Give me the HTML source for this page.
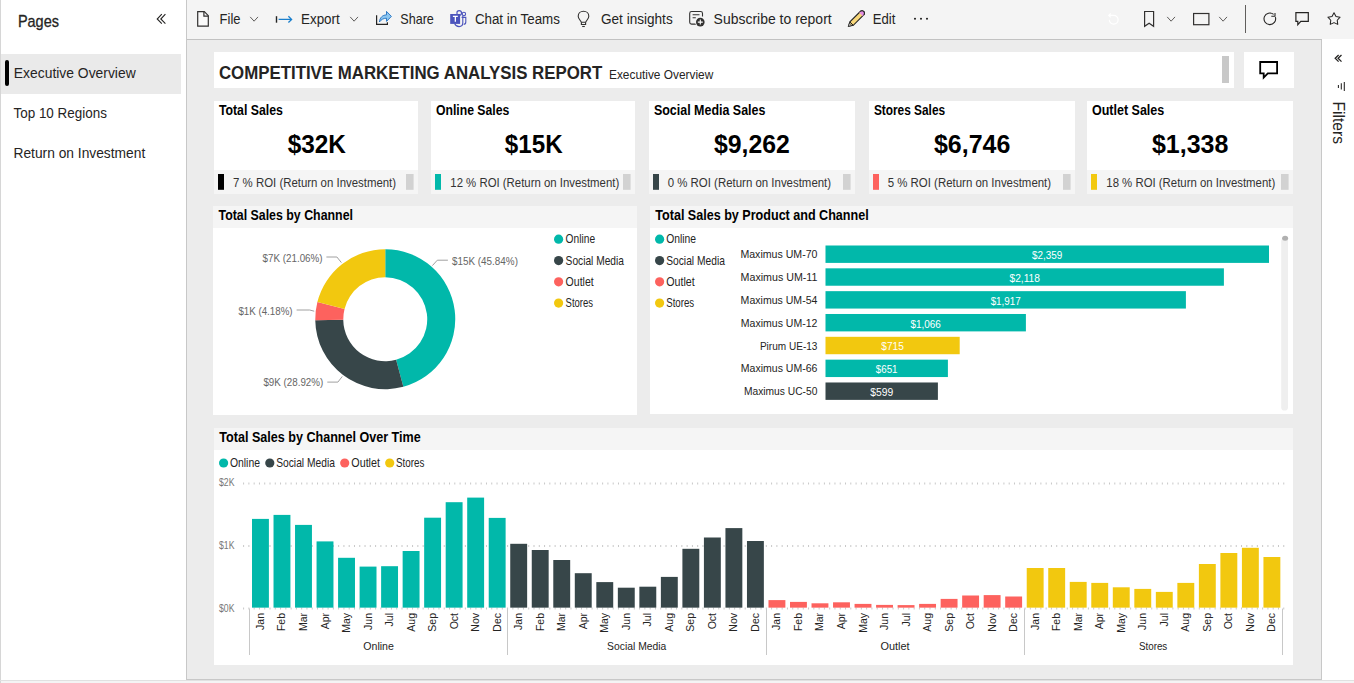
<!DOCTYPE html>
<html><head><meta charset="utf-8"><style>
html,body{margin:0;padding:0;background:#fff;}
#root{position:relative;width:1354px;height:683px;overflow:hidden;font-family:"Liberation Sans",sans-serif;}
svg text{font-family:"Liberation Sans",sans-serif;}
</style></head><body><div id="root">
<div style="position:absolute;left:0px;top:0px;width:1354px;height:683px;background:#f4f4f4"></div>
<div style="position:absolute;left:0px;top:0px;width:186px;height:680px;background:#ffffff"></div>
<div style="position:absolute;left:0px;top:0px;width:1px;height:683px;background:#d6d6d6"></div>
<div style="position:absolute;left:0px;top:680px;width:1354px;height:1px;background:#e1e1e1"></div>
<div style="position:absolute;left:187px;top:0px;width:1167px;height:39px;background:#f4f4f4"></div>
<div style="position:absolute;left:186px;top:0px;width:1px;height:680px;background:#c8c8c8"></div>
<div style="position:absolute;left:187px;top:39px;width:1135px;height:1px;background:#c2c2c2"></div>
<div style="position:absolute;left:187px;top:40px;width:1134px;height:639px;background:#ececec"></div>
<div style="position:absolute;left:1321px;top:40px;width:1px;height:640px;background:#c8c8c8"></div>
<div style="position:absolute;left:187px;top:679px;width:1135px;height:1px;background:#c8c8c8"></div>
<div style="position:absolute;left:1322px;top:39px;width:32px;height:641px;background:#ffffff"></div>
<div style="position:absolute;left:1px;top:54px;width:180px;height:40px;background:#eaeaea"></div>
<div style="position:absolute;left:5px;top:60px;width:4px;height:26px;background:#000;border-radius:2px"></div>
<div style="position:absolute;left:214px;top:52px;width:1020px;height:36px;background:#fff"></div>
<div style="position:absolute;left:1222px;top:56px;width:7px;height:27px;background:#c8c8c8"></div>
<div style="position:absolute;left:1244px;top:52px;width:50px;height:36px;background:#fff"></div>
<div style="position:absolute;left:214px;top:101px;width:204px;height:69px;background:#fff"></div>
<div style="position:absolute;left:214px;top:170px;width:204px;height:24px;background:#f5f5f5"></div>
<div style="position:absolute;left:431px;top:101px;width:204px;height:69px;background:#fff"></div>
<div style="position:absolute;left:431px;top:170px;width:204px;height:24px;background:#f5f5f5"></div>
<div style="position:absolute;left:649px;top:101px;width:206px;height:69px;background:#fff"></div>
<div style="position:absolute;left:649px;top:170px;width:206px;height:24px;background:#f5f5f5"></div>
<div style="position:absolute;left:869px;top:101px;width:206px;height:69px;background:#fff"></div>
<div style="position:absolute;left:869px;top:170px;width:206px;height:24px;background:#f5f5f5"></div>
<div style="position:absolute;left:1087px;top:101px;width:206px;height:69px;background:#fff"></div>
<div style="position:absolute;left:1087px;top:170px;width:206px;height:24px;background:#f5f5f5"></div>
<div style="position:absolute;left:213px;top:206px;width:424px;height:22px;background:#f5f5f5"></div>
<div style="position:absolute;left:213px;top:228px;width:424px;height:187px;background:#fff"></div>
<div style="position:absolute;left:650px;top:206px;width:643px;height:22px;background:#f5f5f5"></div>
<div style="position:absolute;left:650px;top:228px;width:643px;height:186px;background:#fff"></div>
<div style="position:absolute;left:214px;top:428px;width:1079px;height:22px;background:#f5f5f5"></div>
<div style="position:absolute;left:214px;top:450px;width:1079px;height:215px;background:#fff"></div>
<svg style="position:absolute;left:0;top:0" width="1354" height="683" viewBox="0 0 1354 683">
<text transform="translate(17.90 27.00) scale(0.9067 1)" x="-0.00" y="0" font-size="15.99" font-weight="normal" fill="#252423" stroke="#252423" stroke-width="0.3">Pages</text>
<text transform="translate(13.80 78.00) scale(0.9562 1)" x="-0.00" y="0" font-size="14.53" font-weight="normal" fill="#252423">Executive Overview</text>
<text transform="translate(13.50 118.00) scale(0.9256 1)" x="-0.00" y="0" font-size="14.53" font-weight="normal" fill="#252423">Top 10 Regions</text>
<text transform="translate(13.50 158.00) scale(0.9485 1)" x="-0.00" y="0" font-size="14.53" font-weight="normal" fill="#252423">Return on Investment</text>
<text transform="translate(219.60 24.00) scale(0.8931 1)" x="-0.00" y="0" font-size="14.53" font-weight="normal" fill="#252423">File</text>
<text transform="translate(301.00 24.00) scale(0.9237 1)" x="-0.00" y="0" font-size="14.53" font-weight="normal" fill="#252423">Export</text>
<text transform="translate(400.30 24.00) scale(0.8658 1)" x="-0.00" y="0" font-size="14.53" font-weight="normal" fill="#252423">Share</text>
<text transform="translate(474.90 24.00) scale(0.9184 1)" x="-0.00" y="0" font-size="14.53" font-weight="normal" fill="#252423">Chat in Teams</text>
<text transform="translate(601.00 24.00) scale(0.9356 1)" x="-0.00" y="0" font-size="14.53" font-weight="normal" fill="#252423">Get insights</text>
<text transform="translate(713.60 24.00) scale(0.9624 1)" x="-0.00" y="0" font-size="14.53" font-weight="normal" fill="#252423">Subscribe to report</text>
<text transform="translate(872.80 24.00) scale(0.9014 1)" x="-0.00" y="0" font-size="14.53" font-weight="normal" fill="#252423">Edit</text>
<text transform="translate(218.90 79.00) scale(0.8920 1)" x="-0.00" y="0" font-size="18.90" font-weight="bold" fill="#252423">COMPETITIVE MARKETING ANALYSIS REPORT</text>
<text transform="translate(609.00 78.70) scale(0.9498 1)" x="-0.00" y="0" font-size="12.50" font-weight="normal" fill="#252423">Executive Overview</text>
<path d="M161.8,14.2 L157.2,19 L161.8,23.7" fill="none" stroke="#252423" stroke-width="1.1" />
<path d="M165.4,14.2 L160.8,19 L165.4,23.7" fill="none" stroke="#252423" stroke-width="1.1" />
<path d="M197.7,11.7 H204.3 L208.3,15.7 V26.2 H197.7 Z" fill="#fafafa" stroke="#323130" stroke-width="1.2" />
<path d="M203.9,11.7 V16.1 H208.3" fill="none" stroke="#323130" stroke-width="1.2" />
<path d="M250.2,16.9 L254.1,21.2 L258,16.9" fill="none" stroke="#605e5c" stroke-width="1.0" />
<path d="M350.2,16.9 L354.1,21.2 L358,16.9" fill="none" stroke="#605e5c" stroke-width="1.0" />
<path d="M276.5,16.2 V22.7" fill="none" stroke="#252423" stroke-width="1.4" />
<path d="M278.6,19.4 H291.4 M288.4,16.3 L291.6,19.4 L288.4,22.5" fill="none" stroke="#1a7fcc" stroke-width="1.3" />
<path d="M376.6,15.3 V24.3 H387.4 V22.2" fill="none" stroke="#252423" stroke-width="1.2" />
<path d="M379.4,22 C379.8,17.6 382.6,14.9 386.5,14.9 V11.4 L391.4,16.4 L386.5,21.4 V18.2 C383.4,18.2 381.2,19.6 379.4,22 Z" fill="#8cc6f0" stroke="#1f6fc1" stroke-width="0.9" />
<path d="M454.6,23.5 C455.5,25.8 457.2,26.6 459.1,26.6 C461.6,26.6 462.8,24.6 462.8,22.5 V16.0" fill="none" stroke="#4b53bc" stroke-width="1.1" />
<circle cx="459.2" cy="12.9" r="2.3" fill="none" stroke="#4b53bc" stroke-width="1.1"/>
<circle cx="463.9" cy="14.0" r="1.7" fill="none" stroke="#4b53bc" stroke-width="1.1"/>
<path d="M461.6,17.4 H465.8 V22 C465.8,23.5 464.8,24.3 463.6,24.3" fill="none" stroke="#4b53bc" stroke-width="1.1" />
<rect x="450.2" y="14" width="9.9" height="9.9" fill="#4b53bc" />
<path d="M452.9,16.4 H457.8 M455.35,16.4 V21.8" fill="none" stroke="#ffffff" stroke-width="1.3" />
<path d="M583.5,11.3 C580.4,11.3 578.2,13.5 578.2,16.3 C578.2,18.3 579.6,19.4 580.6,21 L581.4,22.3 H585.6 L586.4,21 C587.4,19.4 588.8,18.3 588.8,16.3 C588.8,13.5 586.6,11.3 583.5,11.3 Z" fill="none" stroke="#323130" stroke-width="1.1" />
<path d="M581.4,22.3 V24.5 H585.6 V22.3" fill="none" stroke="#323130" stroke-width="1.1" />
<path d="M582.2,26.5 H584.8" fill="none" stroke="#323130" stroke-width="1.1" />
<path d="M696.2,24.1 H691.6 C690.5,24.1 689.7,23.3 689.7,22.2 V13.4 C689.7,12.3 690.5,11.5 691.6,11.5 H700.6 C701.7,11.5 702.5,12.3 702.5,13.4 V16.5" fill="none" stroke="#323130" stroke-width="1.1" />
<path d="M692.6,14.7 H699.5 M692.6,17.7 H695.8" fill="none" stroke="#323130" stroke-width="1.1" />
<circle cx="700.3" cy="22.1" r="5.2" fill="#f4f4f4"/>
<circle cx="700.3" cy="22.1" r="4.3" fill="#323130"/>
<path d="M700.3,19.6 V24.6 M697.8,22.1 H702.8" fill="none" stroke="#ffffff" stroke-width="1.1" />
<path d="M848.5,26.3 L849.9,21.9 L860.3,11.5 C861.3,10.5 862.8,10.5 863.7,11.5 C864.7,12.4 864.7,13.9 863.7,14.9 L853.3,25.3 Z" fill="#f8d77a" stroke="#252423" stroke-width="1.1" />
<path d="M860.3,11.5 C861.3,10.5 862.8,10.5 863.7,11.5 C864.7,12.4 864.7,13.9 863.7,14.9 L862.7,15.9 L859.3,12.5 Z" fill="#e48ee4" stroke="none" stroke-width="0" />
<path d="M860.3,11.5 C861.3,10.5 862.8,10.5 863.7,11.5 C864.7,12.4 864.7,13.9 863.7,14.9" fill="none" stroke="#252423" stroke-width="1.1" />
<path d="M849.9,21.9 L853.3,25.3" fill="none" stroke="#252423" stroke-width="1.0" />
<path d="M849.4,23.2 L848.5,26.3 L851.8,25.4 Z" fill="#ffffff" stroke="#252423" stroke-width="0.8" />
<circle cx="915.0" cy="18.8" r="1.05" fill="#252423"/>
<circle cx="921.0" cy="18.8" r="1.05" fill="#252423"/>
<circle cx="927.0" cy="18.8" r="1.05" fill="#252423"/>
<path d="M1109,15.4 H1113.7 A4.4,4.4 0 1 1 1109.3,19.8" fill="none" stroke="#ffffff" stroke-width="1.2" />
<path d="M1110.7,13.5 L1108.8,15.4 L1110.7,17.3" fill="none" stroke="#ffffff" stroke-width="1.2" />
<path d="M1144.6,11.5 H1153.6 V26.3 L1149.1,23.2 L1144.6,26.3 Z" fill="none" stroke="#323130" stroke-width="1.2" />
<path d="M1167.2,16.9 L1171.1,21.2 L1175,16.9" fill="none" stroke="#605e5c" stroke-width="1.0" />
<rect x="1193.6" y="13.5" width="15.3" height="11.2" fill="none" stroke="#323130" stroke-width="1.2"/>
<path d="M1219.2,16.9 L1223.1,21.2 L1227,16.9" fill="none" stroke="#605e5c" stroke-width="1.0" />
<rect x="1245" y="5" width="1" height="28" fill="#605e5c" />
<path d="M1275.4,17.2 A5.8,5.8 0 1 1 1273.6,14.4" fill="none" stroke="#252423" stroke-width="1.1" />
<path d="M1271.3,16.3 H1275.0 V13.0" fill="none" stroke="#252423" stroke-width="1.05" />
<path d="M1295.9,12.6 H1308.3 V21.3 H1300.8 L1297.8,24.6 V21.3 H1295.9 Z" fill="none" stroke="#252423" stroke-width="1.2" />
<path d="M1334.00,12.80 L1336.00,16.45 L1340.09,17.22 L1337.23,20.25 L1337.76,24.38 L1334.00,22.60 L1330.24,24.38 L1330.77,20.25 L1327.91,17.22 L1332.00,16.45 Z" fill="none" stroke="#252423" stroke-width="1.05" stroke-linejoin="round"/>
<path d="M1338.6,55.0 L1335.2,58.3 L1338.6,61.6" fill="none" stroke="#252423" stroke-width="1.3" />
<path d="M1341.5,55.0 L1338.1,58.3 L1341.5,61.6" fill="none" stroke="#252423" stroke-width="1.3" />
<path d="M1338.4,84.9 V87.9 M1341.3,83.3 V89.5 M1344.3,82 V90.9" fill="none" stroke="#252423" stroke-width="1.05" />
<text transform="translate(1333.0 101.6) rotate(90)" x="0" y="0" font-size="16.4" fill="#252423" textLength="42.4" lengthAdjust="spacingAndGlyphs">Filters</text>
<path d="M1260.2,62 H1277.1 V73.3 H1267.8 L1263.7,77.6 V73.3 H1260.2 Z" fill="none" stroke="#000000" stroke-width="1.8" />
<text transform="translate(218.90 114.80) scale(0.8735 1)" x="-0.00" y="0" font-size="14.10" font-weight="bold" fill="#000000">Total Sales</text>
<text transform="translate(287.70 152.80) scale(0.9308 1)" x="-0.00" y="0" font-size="26.16" font-weight="bold" fill="#000000">$32K</text>
<rect x="218" y="174" width="6" height="15.8" fill="#000000" />
<rect x="406" y="174" width="7.6" height="15.8" fill="#d2d2d2" />
<text transform="translate(233.10 187.00) scale(0.8733 1)" x="-0.00" y="0" font-size="13.08" font-weight="normal" fill="#333333">7 % ROI (Return on Investment)</text>
<text transform="translate(435.90 114.80) scale(0.8681 1)" x="-0.00" y="0" font-size="14.10" font-weight="bold" fill="#000000">Online Sales</text>
<text transform="translate(504.80 152.80) scale(0.9244 1)" x="-0.00" y="0" font-size="26.16" font-weight="bold" fill="#000000">$15K</text>
<rect x="435" y="174" width="6" height="15.8" fill="#01B8AA" />
<rect x="623" y="174" width="7.6" height="15.8" fill="#d2d2d2" />
<text transform="translate(450.30 187.00) scale(0.8716 1)" x="-0.00" y="0" font-size="13.08" font-weight="normal" fill="#333333">12 % ROI (Return on Investment)</text>
<text transform="translate(653.90 114.80) scale(0.8852 1)" x="-0.00" y="0" font-size="14.10" font-weight="bold" fill="#000000">Social Media Sales</text>
<text transform="translate(713.90 152.80) scale(0.9493 1)" x="-0.00" y="0" font-size="26.16" font-weight="bold" fill="#000000">$9,262</text>
<rect x="653" y="174" width="6" height="15.8" fill="#374649" />
<rect x="843" y="174" width="7.6" height="15.8" fill="#d2d2d2" />
<text transform="translate(667.70 187.00) scale(0.8755 1)" x="-0.00" y="0" font-size="13.08" font-weight="normal" fill="#333333">0 % ROI (Return on Investment)</text>
<text transform="translate(873.90 114.80) scale(0.8422 1)" x="-0.00" y="0" font-size="14.10" font-weight="bold" fill="#000000">Stores Sales</text>
<text transform="translate(933.90 152.80) scale(0.9556 1)" x="-0.00" y="0" font-size="26.16" font-weight="bold" fill="#000000">$6,746</text>
<rect x="873" y="174" width="6" height="15.8" fill="#FD625E" />
<rect x="1063" y="174" width="7.6" height="15.8" fill="#d2d2d2" />
<text transform="translate(887.70 187.00) scale(0.8755 1)" x="-0.00" y="0" font-size="13.08" font-weight="normal" fill="#333333">5 % ROI (Return on Investment)</text>
<text transform="translate(1091.90 114.80) scale(0.8884 1)" x="-0.00" y="0" font-size="14.10" font-weight="bold" fill="#000000">Outlet Sales</text>
<text transform="translate(1151.90 152.80) scale(0.9556 1)" x="-0.00" y="0" font-size="26.16" font-weight="bold" fill="#000000">$1,338</text>
<rect x="1091" y="174" width="6" height="15.8" fill="#F2C80F" />
<rect x="1281" y="174" width="7.6" height="15.8" fill="#d2d2d2" />
<text transform="translate(1106.30 187.00) scale(0.8716 1)" x="-0.00" y="0" font-size="13.08" font-weight="normal" fill="#333333">18 % ROI (Return on Investment)</text>
<text transform="translate(218.50 219.70) scale(0.8877 1)" x="-0.00" y="0" font-size="13.95" font-weight="bold" fill="#000000">Total Sales by Channel</text>
<text transform="translate(655.30 219.70) scale(0.9017 1)" x="-0.00" y="0" font-size="13.95" font-weight="bold" fill="#000000">Total Sales by Product and Channel</text>
<text transform="translate(219.30 441.60) scale(0.9025 1)" x="-0.00" y="0" font-size="13.95" font-weight="bold" fill="#000000">Total Sales by Channel Over Time</text>
<path d="M385.25,249.20 A70.0,70.0 0 0 1 403.34,386.82 L396.10,359.77 A42.0,42.0 0 0 0 385.25,277.20 Z" fill="#01B8AA"/>
<path d="M403.34,386.82 A70.0,70.0 0 0 1 315.26,320.26 L343.25,319.83 A42.0,42.0 0 0 0 396.10,359.77 Z" fill="#374649"/>
<path d="M315.26,320.26 A70.0,70.0 0 0 1 317.38,302.05 L344.53,308.91 A42.0,42.0 0 0 0 343.25,319.83 Z" fill="#FD625E"/>
<path d="M317.38,302.05 A70.0,70.0 0 0 1 385.25,249.20 L385.25,277.20 A42.0,42.0 0 0 0 344.53,308.91 Z" fill="#F2C80F"/>
<path d="M432.4,265.6 L437.3,260.2 H447.9" fill="none" stroke="#a0a0a0" stroke-width="1" />
<path d="M326.4,257 H336.9 L341.4,262.6" fill="none" stroke="#a0a0a0" stroke-width="1" />
<path d="M296.6,310 H309.7 L314.2,311.2" fill="none" stroke="#a0a0a0" stroke-width="1" />
<path d="M327.3,382.1 H337.9 L342.3,376.4" fill="none" stroke="#a0a0a0" stroke-width="1" />
<text transform="translate(451.90 264.70) scale(0.8523 1)" x="-0.00" y="0" font-size="11.63" font-weight="normal" fill="#666666">$15K (45.84%)</text>
<text transform="translate(262.60 262.00) scale(0.8438 1)" x="-0.00" y="0" font-size="11.63" font-weight="normal" fill="#666666">$7K (21.06%)</text>
<text transform="translate(238.40 314.70) scale(0.8399 1)" x="-0.00" y="0" font-size="11.63" font-weight="normal" fill="#666666">$1K (4.18%)</text>
<text transform="translate(263.40 386.30) scale(0.8424 1)" x="-0.00" y="0" font-size="11.63" font-weight="normal" fill="#666666">$9K (28.92%)</text>
<circle cx="558.6" cy="239.2" r="4.6" fill="#01B8AA"/>
<text transform="translate(565.60 243.00) scale(0.8564 1)" x="-0.00" y="0" font-size="11.92" font-weight="normal" fill="#252423">Online</text>
<circle cx="558.6" cy="260.6" r="4.6" fill="#374649"/>
<text transform="translate(565.60 264.70) scale(0.8551 1)" x="-0.00" y="0" font-size="11.92" font-weight="normal" fill="#252423">Social Media</text>
<circle cx="558.6" cy="281.8" r="4.6" fill="#FD625E"/>
<text transform="translate(565.60 285.50) scale(0.8862 1)" x="-0.00" y="0" font-size="11.92" font-weight="normal" fill="#252423">Outlet</text>
<circle cx="558.6" cy="303.1" r="4.6" fill="#F2C80F"/>
<text transform="translate(565.60 307.00) scale(0.7984 1)" x="-0.00" y="0" font-size="11.92" font-weight="normal" fill="#252423">Stores</text>
<circle cx="659.6" cy="239.2" r="4.6" fill="#01B8AA"/>
<text transform="translate(666.20 243.00) scale(0.8681 1)" x="-0.00" y="0" font-size="11.92" font-weight="normal" fill="#252423">Online</text>
<circle cx="659.6" cy="260.6" r="4.6" fill="#374649"/>
<text transform="translate(666.20 264.70) scale(0.8610 1)" x="-0.00" y="0" font-size="11.92" font-weight="normal" fill="#252423">Social Media</text>
<circle cx="659.6" cy="281.8" r="4.6" fill="#FD625E"/>
<text transform="translate(666.20 285.50) scale(0.8987 1)" x="-0.00" y="0" font-size="11.92" font-weight="normal" fill="#252423">Outlet</text>
<circle cx="659.6" cy="303.1" r="4.6" fill="#F2C80F"/>
<text transform="translate(666.20 307.00) scale(0.8129 1)" x="-0.00" y="0" font-size="11.92" font-weight="normal" fill="#252423">Stores</text>
<rect x="825.5" y="245.50" width="443.50" height="17.4" fill="#01B8AA"/>
<text transform="translate(740.40 258.30) scale(0.8996 1)" x="-0.00" y="0" font-size="11.77" font-weight="normal" fill="#252423">Maximus UM-70</text>
<text transform="translate(1032.05 259.10) scale(0.8438 1)" x="-0.00" y="0" font-size="11.77" font-weight="normal" fill="#ffffff">$2,359</text>
<rect x="825.5" y="268.33" width="398.40" height="17.4" fill="#01B8AA"/>
<text transform="translate(740.60 281.13) scale(0.9066 1)" x="-0.00" y="0" font-size="11.77" font-weight="normal" fill="#252423">Maximus UM-11</text>
<text transform="translate(1009.45 281.93) scale(0.8679 1)" x="-0.00" y="0" font-size="11.77" font-weight="normal" fill="#ffffff">$2,118</text>
<rect x="825.5" y="291.16" width="360.40" height="17.4" fill="#01B8AA"/>
<text transform="translate(740.60 303.96) scale(0.8972 1)" x="-0.00" y="0" font-size="11.77" font-weight="normal" fill="#252423">Maximus UM-54</text>
<text transform="translate(990.65 304.76) scale(0.8355 1)" x="-0.00" y="0" font-size="11.77" font-weight="normal" fill="#ffffff">$1,917</text>
<rect x="825.5" y="313.99" width="200.40" height="17.4" fill="#01B8AA"/>
<text transform="translate(740.80 326.79) scale(0.8949 1)" x="-0.00" y="0" font-size="11.77" font-weight="normal" fill="#252423">Maximus UM-12</text>
<text transform="translate(910.45 327.59) scale(0.8466 1)" x="-0.00" y="0" font-size="11.77" font-weight="normal" fill="#ffffff">$1,066</text>
<rect x="825.5" y="336.82" width="134.20" height="17.4" fill="#F2C80F"/>
<text transform="translate(759.90 349.62) scale(0.8546 1)" x="-0.00" y="0" font-size="11.77" font-weight="normal" fill="#252423">Pirum UE-13</text>
<text transform="translate(881.35 350.42) scale(0.8589 1)" x="-0.00" y="0" font-size="11.77" font-weight="normal" fill="#ffffff">$715</text>
<rect x="825.5" y="359.65" width="122.40" height="17.4" fill="#01B8AA"/>
<text transform="translate(740.80 372.45) scale(0.8949 1)" x="-0.00" y="0" font-size="11.77" font-weight="normal" fill="#252423">Maximus UM-66</text>
<text transform="translate(875.80 373.25) scale(0.8322 1)" x="-0.00" y="0" font-size="11.77" font-weight="normal" fill="#ffffff">$651</text>
<rect x="825.5" y="382.48" width="112.40" height="17.4" fill="#374649"/>
<text transform="translate(743.90 395.28) scale(0.8719 1)" x="-0.00" y="0" font-size="11.77" font-weight="normal" fill="#252423">Maximus UC-50</text>
<text transform="translate(870.20 396.08) scale(0.8780 1)" x="-0.00" y="0" font-size="11.77" font-weight="normal" fill="#ffffff">$599</text>
<rect x="1281.2" y="238" width="6.8" height="172.6" rx="3.4" fill="#efefef"/>
<ellipse cx="1285.1" cy="238.3" rx="3.0" ry="2.5" fill="#b0b0b0"/>
<circle cx="223.6" cy="463" r="4.6" fill="#01B8AA"/>
<text transform="translate(229.90 466.60) scale(0.8739 1)" x="-0.00" y="0" font-size="11.92" font-weight="normal" fill="#252423">Online</text>
<circle cx="269.8" cy="463" r="4.6" fill="#374649"/>
<text transform="translate(276.20 466.60) scale(0.8610 1)" x="-0.00" y="0" font-size="11.92" font-weight="normal" fill="#252423">Social Media</text>
<circle cx="344.7" cy="463" r="4.6" fill="#FD625E"/>
<text transform="translate(351.30 466.60) scale(0.9019 1)" x="-0.00" y="0" font-size="11.92" font-weight="normal" fill="#252423">Outlet</text>
<circle cx="389.7" cy="463" r="4.6" fill="#F2C80F"/>
<text transform="translate(396.00 466.60) scale(0.8245 1)" x="-0.00" y="0" font-size="11.92" font-weight="normal" fill="#252423">Stores</text>
<text transform="translate(219.00 485.90) scale(0.8559 1)" x="-0.00" y="0" font-size="10.17" font-weight="normal" fill="#777777">$2K</text>
<text transform="translate(219.00 548.70) scale(0.8559 1)" x="-0.00" y="0" font-size="10.17" font-weight="normal" fill="#777777">$1K</text>
<text transform="translate(219.00 611.70) scale(0.8559 1)" x="-0.00" y="0" font-size="10.17" font-weight="normal" fill="#777777">$0K</text>
<line x1="243.1" y1="483.5" x2="1287" y2="483.5" stroke="#c8c8c8" stroke-width="2" stroke-dasharray="1 4.28"/>
<line x1="243.1" y1="546.0" x2="1287" y2="546.0" stroke="#c8c8c8" stroke-width="2" stroke-dasharray="1 4.28"/>
<line x1="243.1" y1="608.5" x2="1287" y2="608.5" stroke="#c8c8c8" stroke-width="2" stroke-dasharray="1 4.28"/>
<rect x="252.00" y="518.90" width="16.9" height="88.75" fill="#01B8AA"/>
<text transform="translate(263.95 613.0) rotate(-90) scale(0.93 1)" text-anchor="end" font-size="11.3" fill="#252423">Jan</text>
<rect x="273.52" y="514.90" width="16.9" height="92.75" fill="#01B8AA"/>
<text transform="translate(285.47 613.0) rotate(-90) scale(0.93 1)" text-anchor="end" font-size="11.3" fill="#252423">Feb</text>
<rect x="295.04" y="524.90" width="16.9" height="82.75" fill="#01B8AA"/>
<text transform="translate(306.99 613.0) rotate(-90) scale(0.93 1)" text-anchor="end" font-size="11.3" fill="#252423">Mar</text>
<rect x="316.56" y="541.40" width="16.9" height="66.25" fill="#01B8AA"/>
<text transform="translate(328.51 613.0) rotate(-90) scale(0.93 1)" text-anchor="end" font-size="11.3" fill="#252423">Apr</text>
<rect x="338.08" y="557.80" width="16.9" height="49.85" fill="#01B8AA"/>
<text transform="translate(350.03 613.0) rotate(-90) scale(0.93 1)" text-anchor="end" font-size="11.3" fill="#252423">May</text>
<rect x="359.60" y="566.60" width="16.9" height="41.05" fill="#01B8AA"/>
<text transform="translate(371.55 613.0) rotate(-90) scale(0.93 1)" text-anchor="end" font-size="11.3" fill="#252423">Jun</text>
<rect x="381.12" y="566.20" width="16.9" height="41.45" fill="#01B8AA"/>
<text transform="translate(393.07 613.0) rotate(-90) scale(0.93 1)" text-anchor="end" font-size="11.3" fill="#252423">Jul</text>
<rect x="402.64" y="551.00" width="16.9" height="56.65" fill="#01B8AA"/>
<text transform="translate(414.59 613.0) rotate(-90) scale(0.93 1)" text-anchor="end" font-size="11.3" fill="#252423">Aug</text>
<rect x="424.16" y="517.70" width="16.9" height="89.95" fill="#01B8AA"/>
<text transform="translate(436.11 613.0) rotate(-90) scale(0.93 1)" text-anchor="end" font-size="11.3" fill="#252423">Sep</text>
<rect x="445.68" y="502.20" width="16.9" height="105.45" fill="#01B8AA"/>
<text transform="translate(457.63 613.0) rotate(-90) scale(0.93 1)" text-anchor="end" font-size="11.3" fill="#252423">Oct</text>
<rect x="467.20" y="497.60" width="16.9" height="110.05" fill="#01B8AA"/>
<text transform="translate(479.15 613.0) rotate(-90) scale(0.93 1)" text-anchor="end" font-size="11.3" fill="#252423">Nov</text>
<rect x="488.72" y="517.90" width="16.9" height="89.75" fill="#01B8AA"/>
<text transform="translate(500.67 613.0) rotate(-90) scale(0.93 1)" text-anchor="end" font-size="11.3" fill="#252423">Dec</text>
<rect x="249" y="608.6" width="1" height="46.4" fill="#c8c8c8" />
<text transform="translate(363.30 649.60) scale(0.9106 1)" x="-0.00" y="0" font-size="11.63" font-weight="normal" fill="#252423">Online</text>
<rect x="510.24" y="543.80" width="16.9" height="63.85" fill="#374649"/>
<text transform="translate(522.19 613.0) rotate(-90) scale(0.93 1)" text-anchor="end" font-size="11.3" fill="#252423">Jan</text>
<rect x="531.76" y="550.00" width="16.9" height="57.65" fill="#374649"/>
<text transform="translate(543.71 613.0) rotate(-90) scale(0.93 1)" text-anchor="end" font-size="11.3" fill="#252423">Feb</text>
<rect x="553.28" y="560.00" width="16.9" height="47.65" fill="#374649"/>
<text transform="translate(565.23 613.0) rotate(-90) scale(0.93 1)" text-anchor="end" font-size="11.3" fill="#252423">Mar</text>
<rect x="574.80" y="573.20" width="16.9" height="34.45" fill="#374649"/>
<text transform="translate(586.75 613.0) rotate(-90) scale(0.93 1)" text-anchor="end" font-size="11.3" fill="#252423">Apr</text>
<rect x="596.32" y="582.10" width="16.9" height="25.55" fill="#374649"/>
<text transform="translate(608.27 613.0) rotate(-90) scale(0.93 1)" text-anchor="end" font-size="11.3" fill="#252423">May</text>
<rect x="617.84" y="587.70" width="16.9" height="19.95" fill="#374649"/>
<text transform="translate(629.79 613.0) rotate(-90) scale(0.93 1)" text-anchor="end" font-size="11.3" fill="#252423">Jun</text>
<rect x="639.36" y="586.70" width="16.9" height="20.95" fill="#374649"/>
<text transform="translate(651.31 613.0) rotate(-90) scale(0.93 1)" text-anchor="end" font-size="11.3" fill="#252423">Jul</text>
<rect x="660.88" y="576.90" width="16.9" height="30.75" fill="#374649"/>
<text transform="translate(672.83 613.0) rotate(-90) scale(0.93 1)" text-anchor="end" font-size="11.3" fill="#252423">Aug</text>
<rect x="682.40" y="548.80" width="16.9" height="58.85" fill="#374649"/>
<text transform="translate(694.35 613.0) rotate(-90) scale(0.93 1)" text-anchor="end" font-size="11.3" fill="#252423">Sep</text>
<rect x="703.92" y="537.50" width="16.9" height="70.15" fill="#374649"/>
<text transform="translate(715.87 613.0) rotate(-90) scale(0.93 1)" text-anchor="end" font-size="11.3" fill="#252423">Oct</text>
<rect x="725.44" y="528.10" width="16.9" height="79.55" fill="#374649"/>
<text transform="translate(737.39 613.0) rotate(-90) scale(0.93 1)" text-anchor="end" font-size="11.3" fill="#252423">Nov</text>
<rect x="746.96" y="541.00" width="16.9" height="66.65" fill="#374649"/>
<text transform="translate(758.91 613.0) rotate(-90) scale(0.93 1)" text-anchor="end" font-size="11.3" fill="#252423">Dec</text>
<rect x="507" y="608.6" width="1" height="46.4" fill="#c8c8c8" />
<text transform="translate(607.10 649.60) scale(0.8900 1)" x="-0.00" y="0" font-size="11.63" font-weight="normal" fill="#252423">Social Media</text>
<rect x="768.48" y="600.10" width="16.9" height="7.55" fill="#FD625E"/>
<text transform="translate(780.43 613.0) rotate(-90) scale(0.93 1)" text-anchor="end" font-size="11.3" fill="#252423">Jan</text>
<rect x="790.00" y="601.90" width="16.9" height="5.75" fill="#FD625E"/>
<text transform="translate(801.95 613.0) rotate(-90) scale(0.93 1)" text-anchor="end" font-size="11.3" fill="#252423">Feb</text>
<rect x="811.52" y="603.30" width="16.9" height="4.35" fill="#FD625E"/>
<text transform="translate(823.47 613.0) rotate(-90) scale(0.93 1)" text-anchor="end" font-size="11.3" fill="#252423">Mar</text>
<rect x="833.04" y="602.30" width="16.9" height="5.35" fill="#FD625E"/>
<text transform="translate(844.99 613.0) rotate(-90) scale(0.93 1)" text-anchor="end" font-size="11.3" fill="#252423">Apr</text>
<rect x="854.56" y="603.90" width="16.9" height="3.75" fill="#FD625E"/>
<text transform="translate(866.51 613.0) rotate(-90) scale(0.93 1)" text-anchor="end" font-size="11.3" fill="#252423">May</text>
<rect x="876.08" y="604.90" width="16.9" height="2.75" fill="#FD625E"/>
<text transform="translate(888.03 613.0) rotate(-90) scale(0.93 1)" text-anchor="end" font-size="11.3" fill="#252423">Jun</text>
<rect x="897.60" y="605.10" width="16.9" height="2.55" fill="#FD625E"/>
<text transform="translate(909.55 613.0) rotate(-90) scale(0.93 1)" text-anchor="end" font-size="11.3" fill="#252423">Jul</text>
<rect x="919.12" y="603.90" width="16.9" height="3.75" fill="#FD625E"/>
<text transform="translate(931.07 613.0) rotate(-90) scale(0.93 1)" text-anchor="end" font-size="11.3" fill="#252423">Aug</text>
<rect x="940.64" y="598.90" width="16.9" height="8.75" fill="#FD625E"/>
<text transform="translate(952.59 613.0) rotate(-90) scale(0.93 1)" text-anchor="end" font-size="11.3" fill="#252423">Sep</text>
<rect x="962.16" y="595.50" width="16.9" height="12.15" fill="#FD625E"/>
<text transform="translate(974.11 613.0) rotate(-90) scale(0.93 1)" text-anchor="end" font-size="11.3" fill="#252423">Oct</text>
<rect x="983.68" y="595.10" width="16.9" height="12.55" fill="#FD625E"/>
<text transform="translate(995.63 613.0) rotate(-90) scale(0.93 1)" text-anchor="end" font-size="11.3" fill="#252423">Nov</text>
<rect x="1005.20" y="596.50" width="16.9" height="11.15" fill="#FD625E"/>
<text transform="translate(1017.15 613.0) rotate(-90) scale(0.93 1)" text-anchor="end" font-size="11.3" fill="#252423">Dec</text>
<rect x="766" y="608.6" width="1" height="46.4" fill="#c8c8c8" />
<text transform="translate(880.40 649.60) scale(0.9405 1)" x="-0.00" y="0" font-size="11.63" font-weight="normal" fill="#252423">Outlet</text>
<rect x="1026.72" y="568.00" width="16.9" height="39.65" fill="#F2C80F"/>
<text transform="translate(1038.67 613.0) rotate(-90) scale(0.93 1)" text-anchor="end" font-size="11.3" fill="#252423">Jan</text>
<rect x="1048.24" y="568.00" width="16.9" height="39.65" fill="#F2C80F"/>
<text transform="translate(1060.19 613.0) rotate(-90) scale(0.93 1)" text-anchor="end" font-size="11.3" fill="#252423">Feb</text>
<rect x="1069.76" y="581.90" width="16.9" height="25.75" fill="#F2C80F"/>
<text transform="translate(1081.71 613.0) rotate(-90) scale(0.93 1)" text-anchor="end" font-size="11.3" fill="#252423">Mar</text>
<rect x="1091.28" y="582.90" width="16.9" height="24.75" fill="#F2C80F"/>
<text transform="translate(1103.23 613.0) rotate(-90) scale(0.93 1)" text-anchor="end" font-size="11.3" fill="#252423">Apr</text>
<rect x="1112.80" y="587.30" width="16.9" height="20.35" fill="#F2C80F"/>
<text transform="translate(1124.75 613.0) rotate(-90) scale(0.93 1)" text-anchor="end" font-size="11.3" fill="#252423">May</text>
<rect x="1134.32" y="588.90" width="16.9" height="18.75" fill="#F2C80F"/>
<text transform="translate(1146.27 613.0) rotate(-90) scale(0.93 1)" text-anchor="end" font-size="11.3" fill="#252423">Jun</text>
<rect x="1155.84" y="591.90" width="16.9" height="15.75" fill="#F2C80F"/>
<text transform="translate(1167.79 613.0) rotate(-90) scale(0.93 1)" text-anchor="end" font-size="11.3" fill="#252423">Jul</text>
<rect x="1177.36" y="582.90" width="16.9" height="24.75" fill="#F2C80F"/>
<text transform="translate(1189.31 613.0) rotate(-90) scale(0.93 1)" text-anchor="end" font-size="11.3" fill="#252423">Aug</text>
<rect x="1198.88" y="564.00" width="16.9" height="43.65" fill="#F2C80F"/>
<text transform="translate(1210.83 613.0) rotate(-90) scale(0.93 1)" text-anchor="end" font-size="11.3" fill="#252423">Sep</text>
<rect x="1220.40" y="553.00" width="16.9" height="54.65" fill="#F2C80F"/>
<text transform="translate(1232.35 613.0) rotate(-90) scale(0.93 1)" text-anchor="end" font-size="11.3" fill="#252423">Oct</text>
<rect x="1241.92" y="547.80" width="16.9" height="59.85" fill="#F2C80F"/>
<text transform="translate(1253.87 613.0) rotate(-90) scale(0.93 1)" text-anchor="end" font-size="11.3" fill="#252423">Nov</text>
<rect x="1263.44" y="557.00" width="16.9" height="50.65" fill="#F2C80F"/>
<text transform="translate(1275.39 613.0) rotate(-90) scale(0.93 1)" text-anchor="end" font-size="11.3" fill="#252423">Dec</text>
<rect x="1024" y="608.6" width="1" height="46.4" fill="#c8c8c8" />
<text transform="translate(1138.90 649.60) scale(0.8451 1)" x="-0.00" y="0" font-size="11.63" font-weight="normal" fill="#252423">Stores</text>
<rect x="1282" y="608.6" width="1" height="46.4" fill="#c8c8c8" />
</svg></div></body></html>
